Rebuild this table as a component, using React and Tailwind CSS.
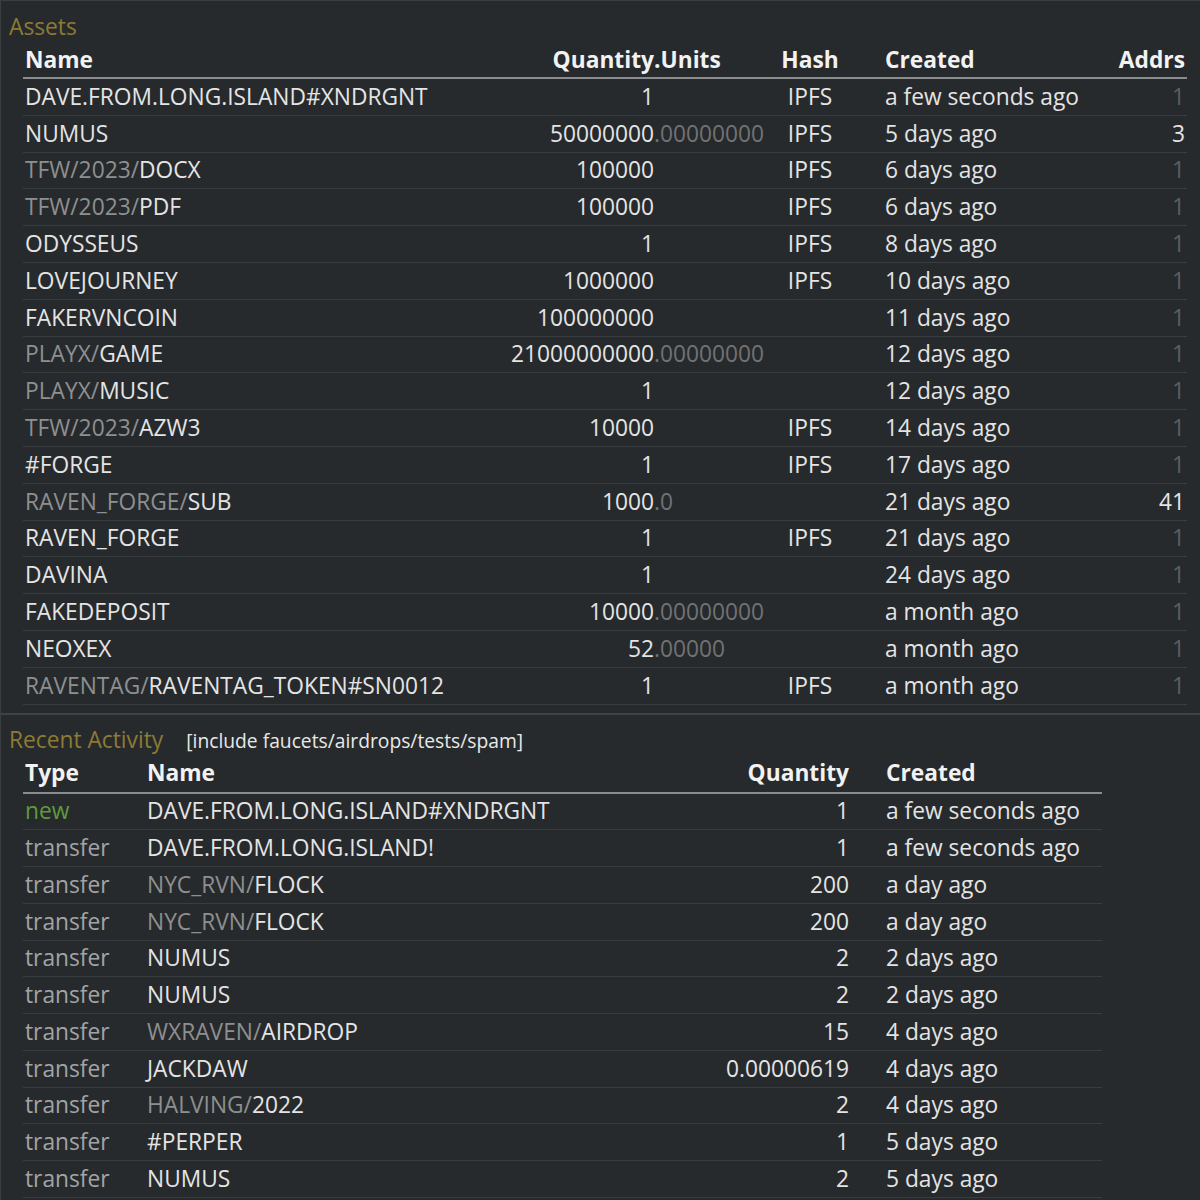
import React from "react";

const assets = [
  { pre: "", name: "DAVE.FROM.LONG.ISLAND#XNDRGNT", int: "1", dec: "", hash: "IPFS", created: "a few seconds ago", addrs: "1", bright: false },
  { pre: "", name: "NUMUS", int: "50000000", dec: ".00000000", hash: "IPFS", created: "5 days ago", addrs: "3", bright: true },
  { pre: "TFW/2023/", name: "DOCX", int: "100000", dec: "", hash: "IPFS", created: "6 days ago", addrs: "1", bright: false },
  { pre: "TFW/2023/", name: "PDF", int: "100000", dec: "", hash: "IPFS", created: "6 days ago", addrs: "1", bright: false },
  { pre: "", name: "ODYSSEUS", int: "1", dec: "", hash: "IPFS", created: "8 days ago", addrs: "1", bright: false },
  { pre: "", name: "LOVEJOURNEY", int: "1000000", dec: "", hash: "IPFS", created: "10 days ago", addrs: "1", bright: false },
  { pre: "", name: "FAKERVNCOIN", int: "100000000", dec: "", hash: "", created: "11 days ago", addrs: "1", bright: false },
  { pre: "PLAYX/", name: "GAME", int: "21000000000", dec: ".00000000", hash: "", created: "12 days ago", addrs: "1", bright: false },
  { pre: "PLAYX/", name: "MUSIC", int: "1", dec: "", hash: "", created: "12 days ago", addrs: "1", bright: false },
  { pre: "TFW/2023/", name: "AZW3", int: "10000", dec: "", hash: "IPFS", created: "14 days ago", addrs: "1", bright: false },
  { pre: "", name: "#FORGE", int: "1", dec: "", hash: "IPFS", created: "17 days ago", addrs: "1", bright: false },
  { pre: "RAVEN_FORGE/", name: "SUB", int: "1000", dec: ".0", hash: "", created: "21 days ago", addrs: "41", bright: true },
  { pre: "", name: "RAVEN_FORGE", int: "1", dec: "", hash: "IPFS", created: "21 days ago", addrs: "1", bright: false },
  { pre: "", name: "DAVINA", int: "1", dec: "", hash: "", created: "24 days ago", addrs: "1", bright: false },
  { pre: "", name: "FAKEDEPOSIT", int: "10000", dec: ".00000000", hash: "", created: "a month ago", addrs: "1", bright: false },
  { pre: "", name: "NEOXEX", int: "52", dec: ".00000", hash: "", created: "a month ago", addrs: "1", bright: false },
  { pre: "RAVENTAG/", name: "RAVENTAG_TOKEN#SN0012", int: "1", dec: "", hash: "IPFS", created: "a month ago", addrs: "1", bright: false },
];

const activity = [
  { type: "new", pre: "", name: "DAVE.FROM.LONG.ISLAND#XNDRGNT", qty: "1", created: "a few seconds ago" },
  { type: "transfer", pre: "", name: "DAVE.FROM.LONG.ISLAND!", qty: "1", created: "a few seconds ago" },
  { type: "transfer", pre: "NYC_RVN/", name: "FLOCK", qty: "200", created: "a day ago" },
  { type: "transfer", pre: "NYC_RVN/", name: "FLOCK", qty: "200", created: "a day ago" },
  { type: "transfer", pre: "", name: "NUMUS", qty: "2", created: "2 days ago" },
  { type: "transfer", pre: "", name: "NUMUS", qty: "2", created: "2 days ago" },
  { type: "transfer", pre: "WXRAVEN/", name: "AIRDROP", qty: "15", created: "4 days ago" },
  { type: "transfer", pre: "", name: "JACKDAW", qty: "0.00000619", created: "4 days ago" },
  { type: "transfer", pre: "HALVING/", name: "2022", qty: "2", created: "4 days ago" },
  { type: "transfer", pre: "", name: "#PERPER", qty: "1", created: "5 days ago" },
  { type: "transfer", pre: "", name: "NUMUS", qty: "2", created: "5 days ago" },
];

function Name({ pre, name }) {
  return (
    <span className="whitespace-nowrap">
      {pre && <span className="text-[#8e8f90]">{pre}</span>}
      <span className="text-[#e4e4e4]">{name}</span>
    </span>
  );
}

export default function App() {
  return (
    <div
      className="w-[1200px] h-[1200px] overflow-hidden bg-[#272a2c] border-t border-l border-[#3b3e41] text-[22.75px] text-[#e4e4e4]"
      style={{ fontFamily: "'Open Sans', 'Noto Sans', sans-serif" }}
    >
      {/* Assets */}
      <div className="pl-[8px] pt-[11px] leading-[30px] h-[40px] text-[#8d7b34]">Assets</div>
      <div className="ml-[22px] w-[1164px]">
        <div className="grid grid-cols-[477px_154px_116px_80px_250px_87px] h-[38px] pt-[2px] items-center font-bold text-[#f2f2f2] border-b-2 border-[#8a8b8c]">
          <div className="pl-[2px]">Name</div>
          <div className="text-right">Quantity</div>
          <div>.Units</div>
          <div className="text-center">Hash</div>
          <div className="pl-[35px]">Created</div>
          <div className="text-right pr-[2px]">Addrs</div>
        </div>
        {assets.map((a, i) => (
          <div
            key={i}
            className="grid grid-cols-[477px_154px_116px_80px_250px_87px] h-[36.8px] items-center border-b border-[#3a3d40]"
          >
            <div className="pl-[2px]">
              <Name pre={a.pre} name={a.name} />
            </div>
            <div className="text-right">{a.int}</div>
            <div className="text-[#717273]">{a.dec}</div>
            <div className="text-center">{a.hash}</div>
            <div className="pl-[35px] whitespace-nowrap">{a.created}</div>
            <div className={`text-right pr-[2px] ${a.bright ? "text-[#e4e4e4]" : "text-[#5c5f61]"}`}>{a.addrs}</div>
          </div>
        ))}
      </div>

      <div className="mt-[8px] h-[2px] bg-[#404346]" />

      {/* Recent Activity */}
      <div className="flex items-baseline pl-[8px] pt-[10px] h-[40px] leading-[30px]">
        <span className="text-[#8d7b34]">Recent Activity</span>
        <span className="ml-[23px] text-[19.25px] text-[#e8e8e8]">[include faucets/airdrops/tests/spam]</span>
      </div>
      <div className="ml-[22px] w-[1079px]">
        <div className="grid grid-cols-[122px_555px_151px_251px] h-[39px] items-center font-bold text-[#f2f2f2] border-b-2 border-[#8a8b8c]">
          <div className="pl-[2px]">Type</div>
          <div className="pl-[2px]">Name</div>
          <div className="text-right pr-[2px]">Quantity</div>
          <div className="pl-[35px]">Created</div>
        </div>
        {activity.map((r, i) => (
          <div
            key={i}
            className="grid grid-cols-[122px_555px_151px_251px] h-[36.75px] items-center border-b border-[#3a3d40]"
          >
            <div className={`pl-[2px] ${r.type === "new" ? "text-[#5f9a3c]" : "text-[#a3a4a5]"}`}>{r.type}</div>
            <div className="pl-[2px]">
              <Name pre={r.pre} name={r.name} />
            </div>
            <div className="text-right pr-[2px]">{r.qty}</div>
            <div className="pl-[35px] whitespace-nowrap">{r.created}</div>
          </div>
        ))}
      </div>
    </div>
  );
}
